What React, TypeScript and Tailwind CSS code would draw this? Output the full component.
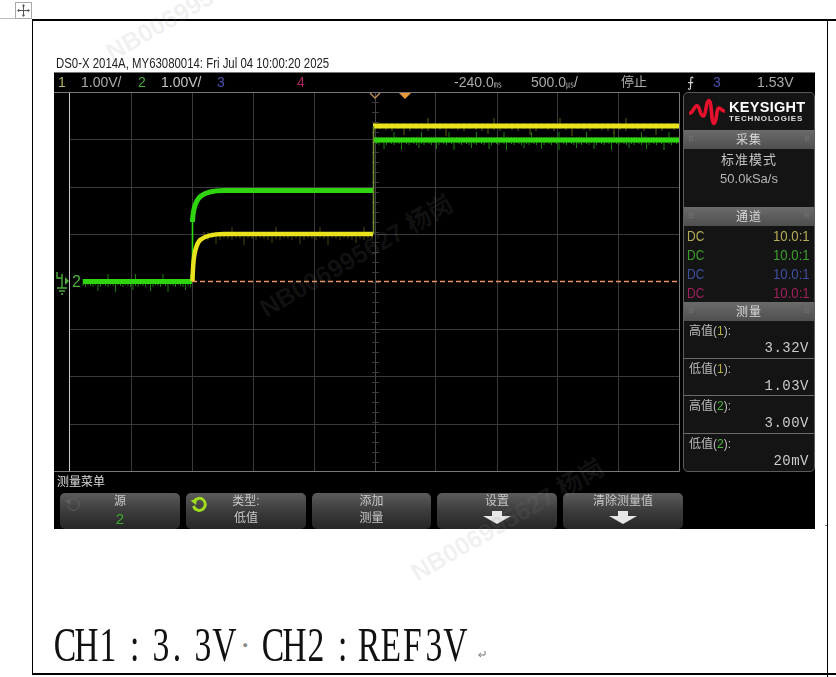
const green = '#2fd60f';
const yellow = '#e8e31c';

const spikes = (x0: number, x1: number, y: number, step: number, seed: number) => {
  let d = '';
  for (let x = x0, i = seed; x < x1; x += step, i++) {
    const h = ((i * 7) % 3) + 3 + (i % 7 === 0 ? 5 : 0);
    const up = ((i * 3) % 3) + 3 + (i % 11 === 0 ? 5 : 0);
    d += `M${x} ${y - up}V${y + h}`;
  }
  return d;
};

const cellWidth = (c: string) => {
  if (c === ':') return 'w-[31.5px]';
  if (c === '.') return 'w-[10px]';
  if (c === ' ') return 'w-[11px]';
  return 'w-[21.5px]';
};

const Chars = ({ text }: { text: string }) => (
  <>
    {text.split('').map((c, i) => (
      <span key={i} className={`inline-flex justify-center ${cellWidth(c)}`}>
        <span className="inline-block scale-x-[0.7] whitespace-pre">{c}</span>
      </span>
    ))}
  </>
);

const PanelHead = ({ label }: { label: string }) => (
  <div className="flex h-[19px] shrink-0 items-center justify-between bg-gradient-to-b from-[#6b6b6b] to-[#4f4f4f] px-1 text-[12px] leading-none text-[#d8d8d8]">
    <span className="text-[8px] leading-none text-[#777]">⠿</span>
    <span className="tracking-[1px]">{label}</span>
    <span className="text-[8px] leading-none text-[#777]">⠿</span>
  </div>
);

const Coupling = ({ color }: { color: string }) => (
  <div className={`flex h-[19px] items-center justify-between pl-[3px] pr-[4px] text-[15px] leading-none ${color}`}>
    <span className="origin-left scale-x-[0.8]">DC</span>
    <span className="origin-right scale-x-[0.88]">10.0:1</span>
  </div>
);

const Measure = ({ name, ch, color, value, last }: { name: string; ch: string; color: string; value: string; last?: boolean }) => (
  <div className={`flex h-[37.5px] shrink-0 flex-col px-[5px] pt-[3px] ${last ? '' : 'border-b border-[#6a6a6a]'}`}>
    <div className="text-[12px] leading-[14px] text-[#bbb]">
      {name}(<span className={color}>{ch}</span>):
    </div>
    <div className="mt-[3px] text-right text-[14px] leading-[15px] tracking-[0.5px] text-[#ccc]" style={{ fontFamily: '"Liberation Mono", monospace' }}>
      {value}
    </div>
  </div>
);

const SoftKey = ({ top, children, arrow, icon, width }: { top: string; children?: React.ReactNode; arrow?: boolean; icon?: 'on' | 'off'; width: string }) => (
  <div className={`relative flex h-[36px] flex-col items-center rounded-[5px] bg-gradient-to-b from-[#5c5c5c] via-[#3c3c3c] to-[#262626] text-[12px] leading-[17px] text-[#c8c8c8] ${width}`}>
    {icon && (
      <svg className="absolute left-[3px] top-[1px]" width="20" height="20" viewBox="0 0 20 20" fill="none">
        <path d="M5 7.5A6 6 0 1 1 4.5 12" stroke={icon === 'on' ? '#9fdc1e' : '#5e5e5e'} strokeWidth={icon === 'on' ? 3 : 1} />
        <path d="M1.5 6.5L8 5L7 11Z" fill={icon === 'on' ? '#9fdc1e' : '#5e5e5e'} />
      </svg>
    )}
    <div>{top}</div>
    {children}
    {arrow && (
      <svg className="mt-[1px]" width="30" height="13" viewBox="0 0 30 13">
        <path d="M10 0H20V5H29L15 13L1 5H10Z" fill="#e6e6e6" />
      </svg>
    )}
  </div>
);

const Watermark = ({ className, text }: { className: string; text: string }) => (
  <div className={`pointer-events-none absolute origin-left -rotate-[30deg] whitespace-nowrap text-[25px] font-bold leading-none text-[#8a8a8a]/12 ${className}`}>
    {text}
  </div>
);

export default function App() {
  const vLines = [77, 138, 199, 260, 381, 443, 503, 564];
  const hLines = [47, 95, 142, 237, 284, 332];

  return (
    <div className="relative h-[677px] w-[836px] overflow-hidden bg-white" style={{ fontFamily: '"Liberation Sans", "Noto Sans CJK SC", sans-serif' }}>
      {/* table move handle */}
      <div className="flex h-[19px] items-end">
        <div className="h-px w-[15px] bg-[#bdbdbd]" />
        <div className="flex h-[17px] w-[17px] items-center justify-center border border-[#a8a8a8] bg-white">
          <svg width="13" height="13" viewBox="0 0 13 13" stroke="#555" fill="#555" strokeWidth="1">
            <path d="M6.5 1V12M1 6.5H12" fill="none" />
            <path d="M6.5 0L4.8 2.2H8.2ZM6.5 13L4.8 10.8H8.2ZM0 6.5L2.2 4.8V8.2ZM13 6.5L10.8 4.8V8.2Z" stroke="none" />
          </svg>
        </div>
      </div>

      {/* table cell */}
      <div className="relative ml-[32px] h-[656px] w-[796px] border-x border-y-2 border-x-black border-y-black">
        <div className="ml-[21px] pt-[32px]">
          <div className="ml-[2px] h-[19px] origin-left scale-x-[0.76] whitespace-nowrap text-[15px] leading-[19px] text-[#222]">
            DS0-X 2014A, MY63080014: Fri Jul 04 10:00:20 2025
          </div>

          {/* scope capture */}
          <div className="w-[761px] bg-black blur-[0.6px]">
            <div className="relative h-[20px] border-t border-[#777] text-[14px] leading-[18px] text-[#aaa]">
              <span className="absolute left-[4px] text-[#b5b56a]">1</span>
              <span className="absolute left-[27px]">1.00V/</span>
              <span className="absolute left-[84px] text-[#4aa93a]">2</span>
              <span className="absolute left-[107px] text-[#c4c4c4]">1.00V/</span>
              <span className="absolute left-[163px] text-[#4a54a8]">3</span>
              <span className="absolute left-[243px] text-[#a8245e]">4</span>
              <span className="absolute left-[400px]">-240.0<span className="text-[8px]">㎳</span></span>
              <span className="absolute left-[477px]">500.0<span className="text-[8px]">㎲</span>/</span>
              <span className="absolute left-[567px] text-[13px]">停止</span>
              <span className="absolute left-[633px] text-[#d8d8d8]">⨍</span>
              <span className="absolute left-[659px] text-[#4a54a8]">3</span>
              <span className="absolute left-[703px]">1.53V</span>
            </div>

            <div className="flex h-[380px]">
              {/* waveform chart */}
              <svg width="626" height="380" viewBox="0 0 626 380" className="shrink-0">
                <g stroke="#3a3a3a" strokeWidth="1">
                  {vLines.map((x) => <path key={x} d={`M${x + 0.5} 0V380`} />)}
                  {hLines.map((y) => <path key={y} d={`M16 ${y + 0.5}H625`} />)}
                </g>
                <path d="M321.5 0V380" stroke="#444" />
                <g stroke="#3a3a3a">
                  {Array.from({ length: 38 }, (_, i) => <path key={i} d={`M318 ${i * 10 + 0.5}H325`} />)}
                </g>
                <path d="M15.5 0V380" stroke="#c8c8c8" />
                <path d="M0 0.5H625.5V379.5H0" fill="none" stroke="#787878" />
                {/* trigger markers */}
                <path d="M316 1L321 6L326 1" fill="none" stroke="#c5915a" strokeWidth="1.3" />
                <path d="M345 1H357L351 7Z" fill="#e89a3a" />
                {/* trigger level */}
                <path d="M138 189.5H625" stroke="#ec9560" strokeWidth="1.4" strokeDasharray="5 3" />
                {/* noise */}
                <path d={spikes(320, 625, 48, 2.5, 3)} stroke="#1a7a0e" strokeWidth="1" />
                <path d={spikes(320, 625, 34, 6, 2)} stroke="#5f5c10" strokeWidth="1" />
                <path d={spikes(29, 138, 190, 2.5, 1)} stroke="#1a7a0e" strokeWidth="1" />
                <path d={spikes(150, 319, 143, 4, 4)} stroke="#5f5c10" strokeWidth="0.8" />
                {/* channel 2 */}
                <path d="M29 189.5H138" fill="none" stroke={green} strokeWidth="5" />
                <path d="M138.5 189V128" fill="none" stroke={green} strokeWidth="1.6" />
                <path d="M138.5 130C139 115 142 108 147 104C152 100 160 98.5 170 98.5H319" fill="none" stroke={green} strokeWidth="5" />
                <path d="M319 48H625" fill="none" stroke={green} strokeWidth="5" />
                {/* channel 1 */}
                <path d="M138.5 189C139 170 140 155 146 148C152 143 160 142 170 142H319" fill="none" stroke={yellow} strokeWidth="4.5" />
                <path d="M319 34H625" fill="none" stroke={yellow} strokeWidth="5" />
                <path d="M319.5 34V142" stroke="#6f8f30" strokeWidth="1.5" />
                {/* ground reference */}
                <g stroke="#4fae3e" fill="none" strokeWidth="1.4">
                  <path d="M8 182V196M3 196H13M5 199H11M7 202H9" />
                  <path d="M8 186H3V180" />
                </g>
                <path d="M11 185L15 189L11 193Z" fill="#4fae3e" />
                <text x="18" y="195" fontSize="16" fill="#4fae3e">2</text>
              </svg>

              {/* side panel */}
              <div className="ml-[3px] flex h-[380px] w-[132px] flex-col overflow-hidden rounded-[5px] border border-[#5a5a5a] bg-[#141414]">
                <div className="flex h-[37px] shrink-0 items-center pl-[5px]">
                  <svg width="36" height="28" viewBox="0 0 36 28" fill="none" stroke="#e8112d" strokeWidth="3.6" strokeLinecap="round">
                    <path d="M1.5 15C5 13 5.5 7 8.5 8C11 9 11 18 14 18C17 18 17 2.5 20 2.5C23 3 22 25.5 25 25.5C28 25 27 10 30 10C32 10 33 13 35 13" />
                  </svg>
                  <div className="ml-[4px] flex flex-col">
                    <span className="text-[14.5px] font-bold leading-[14px] tracking-[0.3px] text-white">KEYSIGHT</span>
                    <span className="text-[8px] font-bold leading-[9px] tracking-[0.85px] text-[#ddd]">TECHNOLOGIES</span>
                  </div>
                </div>
                <PanelHead label="采集" />
                <div className="h-[58px] shrink-0 pt-[1px] text-center text-[13px] leading-[19px] text-[#c4c4c4]">
                  <div className="tracking-[1px]">标准模式</div>
                  <div className="text-[#b5b5b5]">50.0kSa/s</div>
                </div>
                <PanelHead label="通道" />
                <div className="h-[76px] shrink-0">
                  <Coupling color="text-[#b5ad55]" />
                  <Coupling color="text-[#3d9e2c]" />
                  <Coupling color="text-[#3f4fa0]" />
                  <Coupling color="text-[#a01f5c]" />
                </div>
                <PanelHead label="测量" />
                <Measure name="高值" ch="1" color="text-[#b5ad3a]" value="3.32V" />
                <Measure name="低值" ch="1" color="text-[#b5ad3a]" value="1.03V" />
                <Measure name="高值" ch="2" color="text-[#4fb53a]" value="3.00V" />
                <Measure name="低值" ch="2" color="text-[#4fb53a]" value="20mV" last />
              </div>
            </div>

            {/* softkey menu */}
            <div className="h-[21px] pl-[3px] text-[12px] leading-[20px] text-[#ddd]">测量菜单</div>
            <div className="flex h-[36px] gap-[6px] pl-[6px]">
              <SoftKey top="源" icon="off" width="w-[120px]"><div className="text-[15px] leading-[18px] text-[#3fa92e]">2</div></SoftKey>
              <SoftKey top="类型:" icon="on" width="w-[120px]"><div>低值</div></SoftKey>
              <SoftKey top="添加" width="w-[119px]"><div>测量</div></SoftKey>
              <SoftKey top="设置" arrow width="w-[120px]" />
              <SoftKey top="清除测量值" arrow width="w-[120px]" />
            </div>
          </div>

          {/* caption */}
          <div className="mt-[92px] flex h-[48px] items-center text-[48px] leading-none text-[#111]" style={{ fontFamily: '"Liberation Serif", serif' }}>
            <Chars text="CH1:3. 3V" />
            <span className="inline-block w-[27px] pl-[7px] text-[9px] text-[#888]">●</span>
            <Chars text="CH2:REF3V" />
            <svg className="ml-[11px] mt-[18px]" width="9" height="9" viewBox="0 0 9 9" fill="none" stroke="#777">
              <path d="M8 1V5H2M4 3L1.5 5L4 7" />
            </svg>
          </div>
        </div>
      </div>

      {/* top and bottom rules reach past the cell */}
      <div className="absolute left-[827px] top-[19px] h-[2px] w-[9px] bg-black" />
      <div className="absolute left-[827px] top-[673px] h-[2px] w-[9px] bg-black" />
      <div className="absolute left-[827px] top-[675px] h-[2px] w-px bg-black" />
      <div className="absolute left-[825px] top-[525px] h-px w-[2px] bg-[#777]" />

      <Watermark className="left-[108px] top-[42px]" text="NB006995627 杨岗" />
      <Watermark className="left-[262px] top-[298px]" text="NB006995627 杨岗" />
      <Watermark className="left-[413px] top-[562px]" text="NB006995627 杨岗" />
    </div>
  );
}
